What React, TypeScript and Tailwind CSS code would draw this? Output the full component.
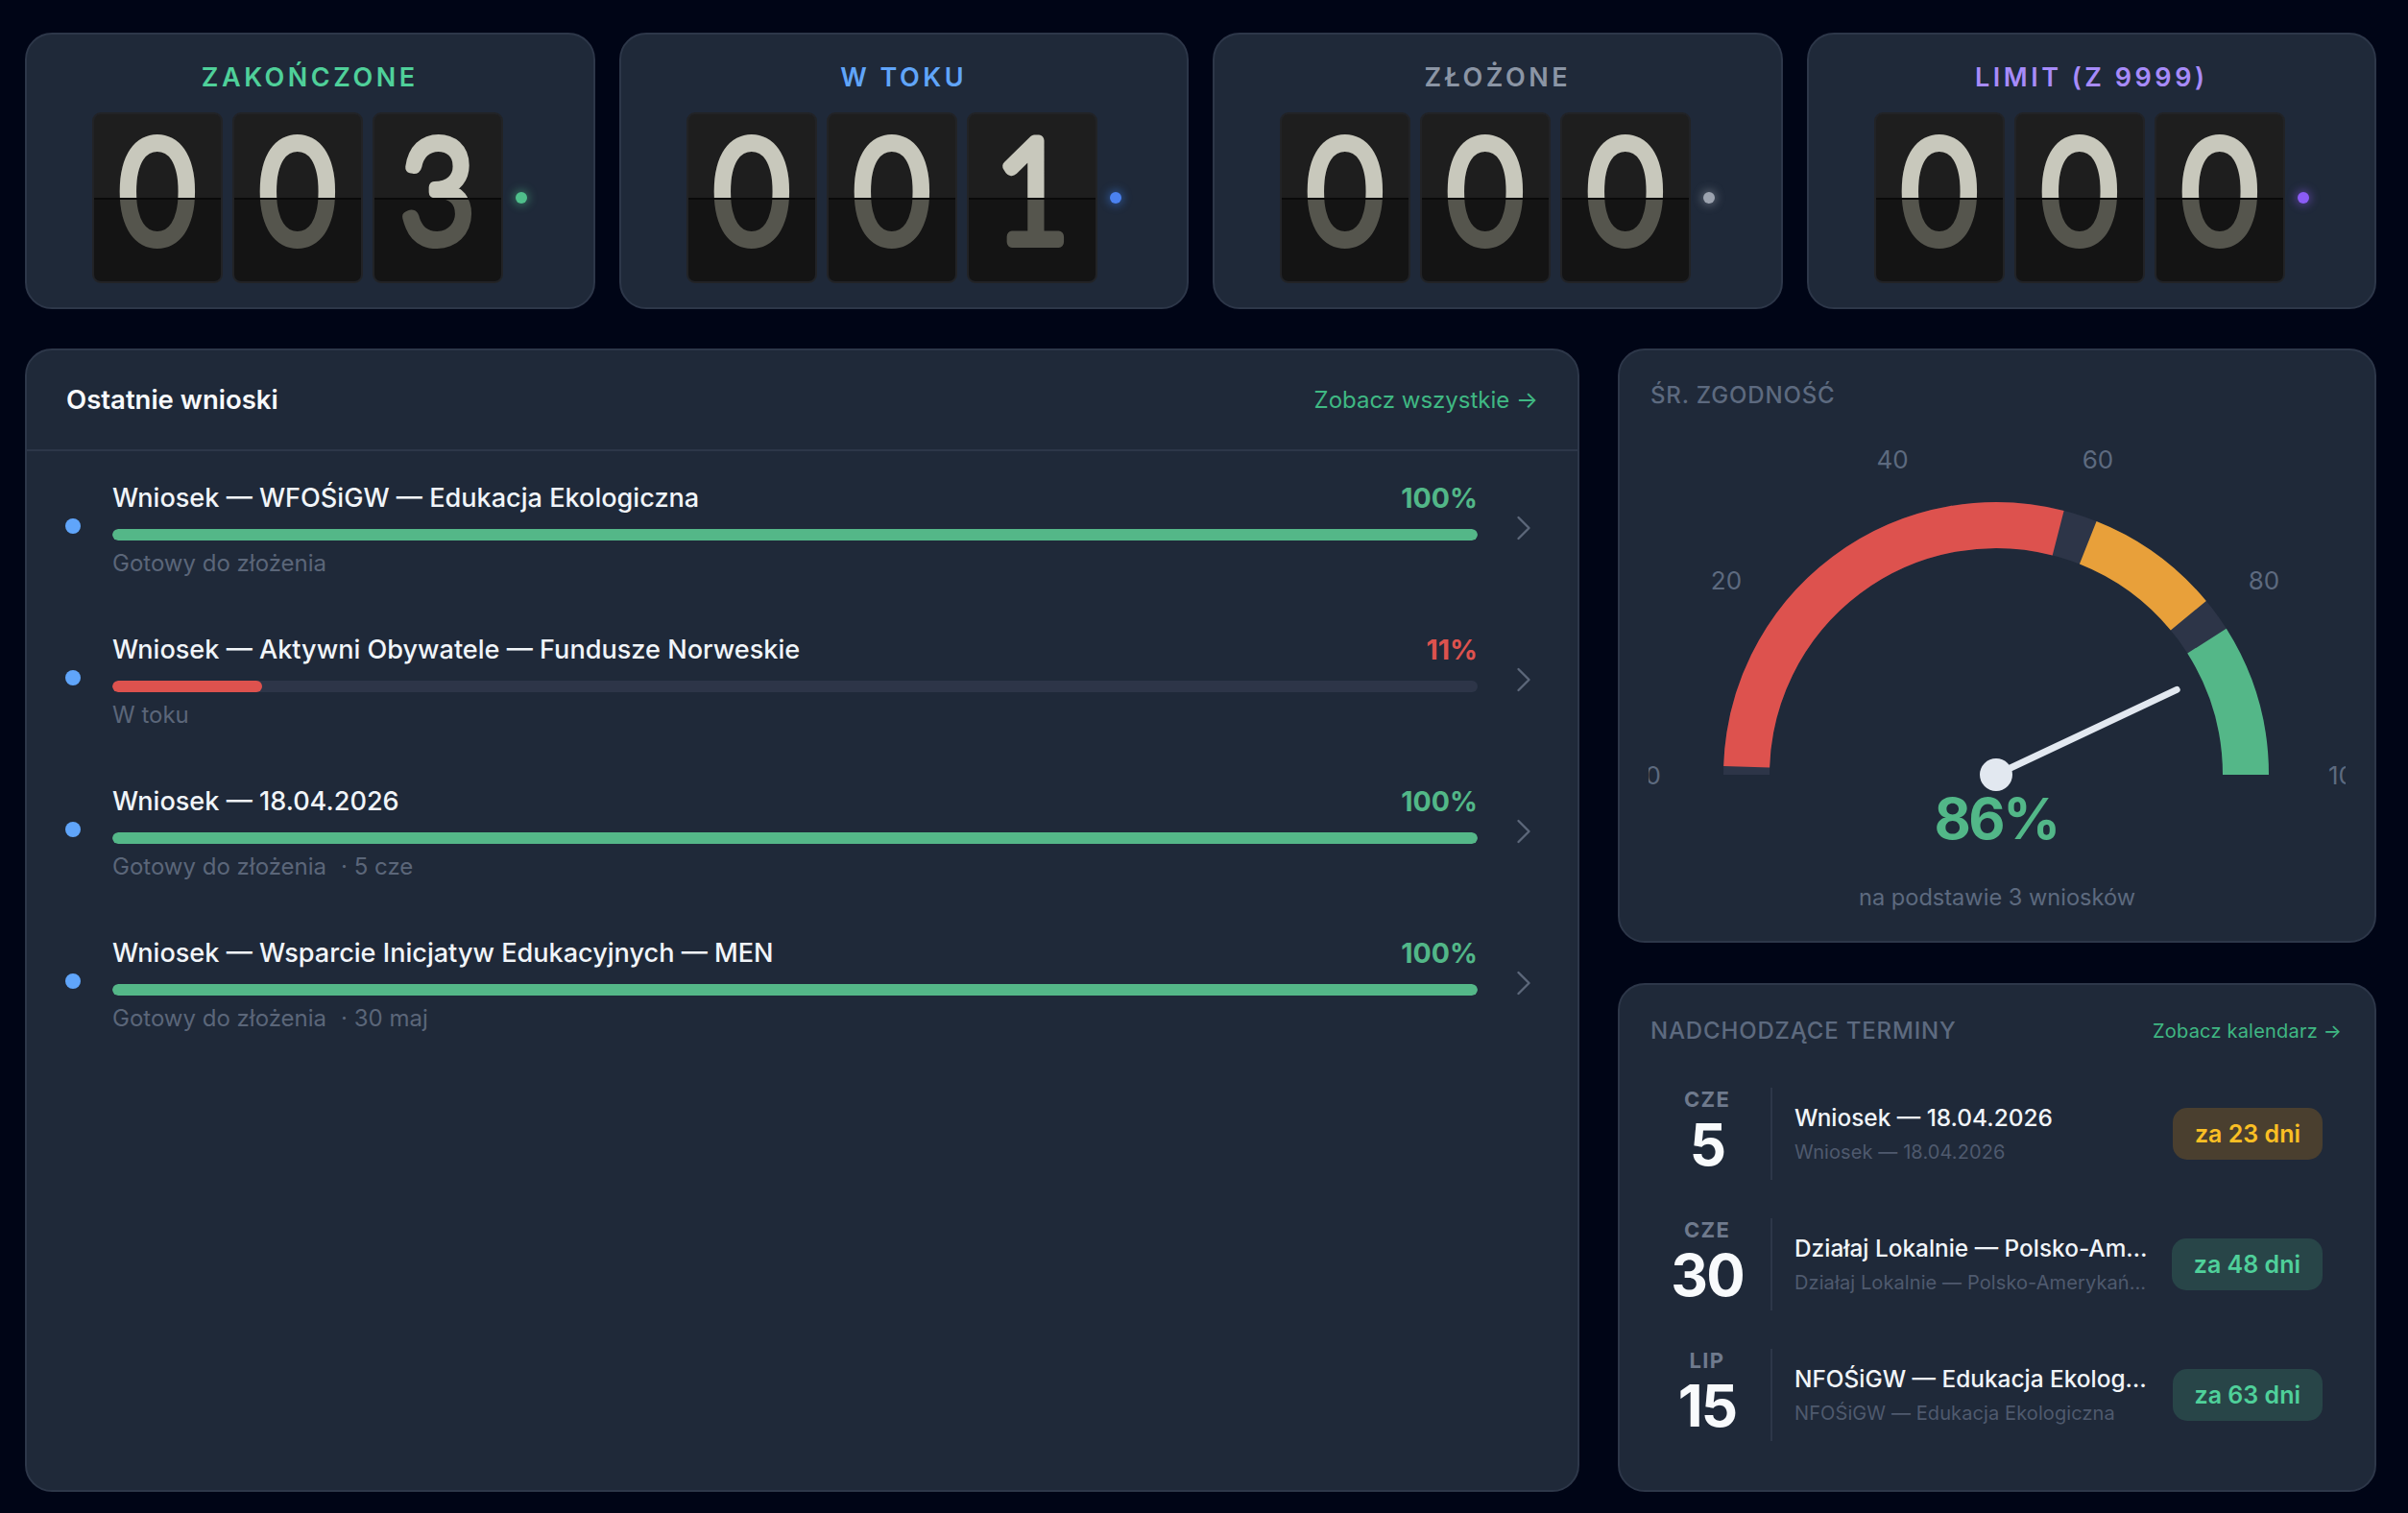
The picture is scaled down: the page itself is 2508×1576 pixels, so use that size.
import React from "react";
import { ChevronRight } from "lucide-react";

const stats = [
  { label: "ZAKOŃCZONE", value: "003", labelClass: "text-[#4fd09a]", dotClass: "bg-[#4fbf8b] shadow-[0_0_10px_2px_rgba(79,191,139,0.45)]" },
  { label: "W TOKU", value: "001", labelClass: "text-[#60a5fa]", dotClass: "bg-[#4b82f0] shadow-[0_0_10px_2px_rgba(59,130,246,0.45)]" },
  { label: "ZŁOŻONE", value: "000", labelClass: "text-[#8b95a5]", dotClass: "bg-[#9ca3af] shadow-[0_0_10px_2px_rgba(156,163,175,0.45)]" },
  { label: "LIMIT (Z 9999)", value: "000", labelClass: "text-[#a78bfa]", dotClass: "bg-[#8b5cf6] shadow-[0_0_10px_2px_rgba(139,92,246,0.45)]" },
];

const requests = [
  { title: "Wniosek — WFOŚiGW — Edukacja Ekologiczna", pct: 100, sub: "Gotowy do złożenia", date: "" },
  { title: "Wniosek — Aktywni Obywatele — Fundusze Norweskie", pct: 11, sub: "W toku", date: "" },
  { title: "Wniosek — 18.04.2026", pct: 100, sub: "Gotowy do złożenia", date: "· 5 cze" },
  { title: "Wniosek — Wsparcie Inicjatyw Edukacyjnych — MEN", pct: 100, sub: "Gotowy do złożenia", date: "· 30 maj" },
];

const deadlines = [
  { month: "CZE", day: "5", title: "Wniosek — 18.04.2026", sub: "Wniosek — 18.04.2026", left: "za 23 dni", soon: true },
  { month: "CZE", day: "30", title: "Działaj Lokalnie — Polsko-Amerykańska Fundacja", sub: "Działaj Lokalnie — Polsko-Amerykańska Fundacja Wolności", left: "za 48 dni", soon: false },
  { month: "LIP", day: "15", title: "NFOŚiGW — Edukacja Ekologiczna 2026", sub: "NFOŚiGW — Edukacja Ekologiczna", left: "za 63 dni", soon: false },
];

function DigitGlyph({ value, color }: { value: string; color: string }) {
  return (
    <svg width="132" height="174" className="block shrink-0">
      <text
        transform="translate(66 133) scale(0.9 1)"
        textAnchor="middle"
        fontFamily="Lato, sans-serif"
        fontWeight="300"
        fontSize="148"
        fill={color}
        stroke={color}
        strokeWidth="12"
        strokeLinejoin="round"
      >
        {value}
      </text>
    </svg>
  );
}

function FlipDigit({ value }: { value: string }) {
  return (
    <div className="w-[136px] h-[178px] rounded-[9px] border-2 border-[#222326] overflow-hidden flex flex-col">
      <div className="h-[87px] box-content bg-[#1e1e1e] overflow-hidden border-b-2 border-[#0a0a0a]">
        <DigitGlyph value={value} color="#c8c8bc" />
      </div>
      <div className="flex-1 bg-[#141414] overflow-hidden">
        <div className="-mt-[89px]">
          <DigitGlyph value={value} color="#55554d" />
        </div>
      </div>
    </div>
  );
}

function StatCard({ stat }: { stat: (typeof stats)[number] }) {
  return (
    <div className="h-[288px] bg-[#1f2939] border-2 border-[#2d3749] rounded-[28px] flex flex-col items-center pt-[28px]">
      <div className={`text-[27px] leading-[34px] font-semibold tracking-[0.13em] ${stat.labelClass}`}>{stat.label}</div>
      <div className="flex items-center gap-[10px] mt-[19px]">
        {stat.value.split("").map((d, i) => (
          <FlipDigit key={i} value={d} />
        ))}
        <div className={`w-[12px] h-[12px] rounded-full ml-[3px] ${stat.dotClass}`} />
      </div>
    </div>
  );
}

function RequestRow({ item }: { item: (typeof requests)[number] }) {
  const good = item.pct >= 80;
  return (
    <div className="flex items-center h-[101px] mb-[57px]">
      <div className="w-[16px] h-[16px] rounded-full bg-[#60a5fa] shrink-0 -mt-[9px]" />
      <div className="w-[1422px] ml-[33px] shrink-0">
        <div className="flex justify-between items-center h-[34px] leading-[34px]">
          <span className="text-[27.1px] font-[450] text-[#f1f5f9]">{item.title}</span>
          <span className={`text-[28.5px] font-bold ${good ? "text-[#52b788]" : "text-[#dd524e]"}`}>{item.pct}%</span>
        </div>
        <div className="h-[12px] mt-[15px] rounded-full bg-[#2d3548] overflow-hidden">
          <div className={`h-full rounded-full ${good ? "bg-[#54b788]" : "bg-[#dd524e]"}`} style={{ width: `${item.pct}%` }} />
        </div>
        <div className="mt-[8px] h-[32px] text-[24px] leading-[32px] text-[#5b6679] flex gap-[15px]">
          <span>{item.sub}</span>
          {item.date && <span>{item.date}</span>}
        </div>
      </div>
      <ChevronRight className="ml-[26px] shrink-0 w-[44px] h-[44px] text-[#5c677a] -mt-[6px]" strokeWidth={1.3} />
    </div>
  );
}

function polar(pct: number, r: number) {
  const a = Math.PI * (1 - pct / 100);
  return { x: 362 + r * Math.cos(a), y: 357 - r * Math.sin(a) };
}

function arc(from: number, to: number) {
  const s = polar(from, 260);
  const e = polar(to, 260);
  return `M ${s.x} ${s.y} A 260 260 0 0 1 ${e.x} ${e.y}`;
}

function Gauge() {
  const tip = polar(86, 208);
  return (
    <svg width="726" height="430" className="block font-['Inter',sans-serif]">
      <path d={arc(0, 100)} fill="none" stroke="#2d3548" strokeWidth="48" />
      <path d={arc(1, 58)} fill="none" stroke="#dd524e" strokeWidth="48" />
      <path d={arc(62, 78)} fill="none" stroke="#e8a03a" strokeWidth="48" />
      <path d={arc(82, 100)} fill="none" stroke="#54b788" strokeWidth="48" />
      <g fill="#5d6a7f" fontSize="26" textAnchor="middle" dominantBaseline="central">
        <text x="13" y="357" textAnchor="end">0</text>
        <text x="81" y="154">20</text>
        <text x="254" y="28">40</text>
        <text x="468" y="28">60</text>
        <text x="641" y="154">80</text>
        <text x="708" y="357" textAnchor="start">100</text>
      </g>
      <line x1="362" y1="357" x2={tip.x} y2={tip.y} stroke="#e2e8f0" strokeWidth="7" strokeLinecap="round" />
      <circle cx="362" cy="357" r="17" fill="#e2e8f0" />
      <text x="362" y="402" textAnchor="middle" dominantBaseline="central" fill="#52b788" fontSize="59" fontWeight="700" letterSpacing="-2.5">86%</text>
    </svg>
  );
}

function DeadlineRow({ item }: { item: (typeof deadlines)[number] }) {
  return (
    <div className="flex items-center h-[96px] mb-[40px]">
      <div className="w-[116px] shrink-0 flex flex-col items-center -mt-[7px]">
        <div className="text-[22px] leading-[26px] font-bold tracking-[0.06em] text-[#6f7a8d] mb-[3px]">{item.month}</div>
        <div className="text-[60px] leading-[62px] font-bold text-[#f8fafc] tracking-[-0.03em]">{item.day}</div>
      </div>
      <div className="ml-[8px] w-[2px] h-[96px] bg-[#2d3749] shrink-0" />
      <div className="flex-1 min-w-0 ml-[23px]">
        <div className="truncate text-[24.4px] leading-[32px] font-[550] text-[#f1f5f9]">{item.title}</div>
        <div className="truncate mt-[6px] text-[20px] leading-[28px] text-[#4f5a6e] tracking-[0.005em]">{item.sub}</div>
      </div>
      <div className={`ml-[24px] h-[54px] px-[23px] pt-[2px] rounded-[15px] shrink-0 flex items-center text-[25px] font-semibold ${item.soon ? "bg-[#4a3f2f] text-[#fbbf24]" : "bg-[#284548] text-[#4fd09a]"}`}>
        {item.left}
      </div>
    </div>
  );
}

export default function App() {
  return (
    <div className="w-[2508px] h-[1576px] bg-[#000516] pl-[26px] pr-[33px] pt-[34px] font-['Inter',sans-serif] overflow-hidden flex flex-col gap-[41px]">
      <div className="grid grid-cols-4 gap-[25px]">
        {stats.map((s) => (
          <StatCard key={s.label} stat={s} />
        ))}
      </div>
      <div className="flex gap-[40px] h-[1191px]">
        <div className="w-[1619px] bg-[#1f2939] border-2 border-[#2d3749] rounded-[28px] flex flex-col">
          <div className="h-[105px] shrink-0 border-b-2 border-[#2d3749] flex items-center justify-between pl-[41px] pr-[41px]">
            <span className="text-[27.5px] font-semibold text-[#f8fafc]">Ostatnie wnioski</span>
            <span className="text-[24px] text-[#3fb883]">Zobacz wszystkie →</span>
          </div>
          <div className="pt-[32px] pl-[40px]">
            {requests.map((r) => (
              <RequestRow key={r.title} item={r} />
            ))}
          </div>
        </div>
        <div className="w-[790px] flex flex-col gap-[42px]">
          <div className="h-[619px] bg-[#1f2939] border-2 border-[#2d3749] rounded-[28px] flex flex-col items-center pt-[32px]">
            <div className="self-start pl-[32px] text-[24px] leading-[30px] font-medium text-[#5d6a7f] tracking-[0.035em]">ŚR. ZGODNOŚĆ</div>
            <div className="mt-[23px]">
              <Gauge />
            </div>
            <div className="mt-[39px] text-[23.6px] leading-[32px] text-[#5d6a7f]">na podstawie 3 wniosków</div>
          </div>
          <div className="flex-1 bg-[#1f2939] border-2 border-[#2d3749] rounded-[28px] pt-[32px] pl-[32px] pr-[20px]">
            <div className="flex items-center justify-between h-[32px] pr-[14px]">
              <span className="text-[24px] font-medium text-[#5d6a7f] tracking-[0.035em]">NADCHODZĄCE TERMINY</span>
              <span className="text-[20px] text-[#3fb883] tracking-[0.01em]">Zobacz kalendarz →</span>
            </div>
            <div className="mt-[43px] pr-[34px] pl-[1px]">
              {deadlines.map((d) => (
                <DeadlineRow key={d.day} item={d} />
              ))}
            </div>
          </div>
        </div>
      </div>
    </div>
  );
}
